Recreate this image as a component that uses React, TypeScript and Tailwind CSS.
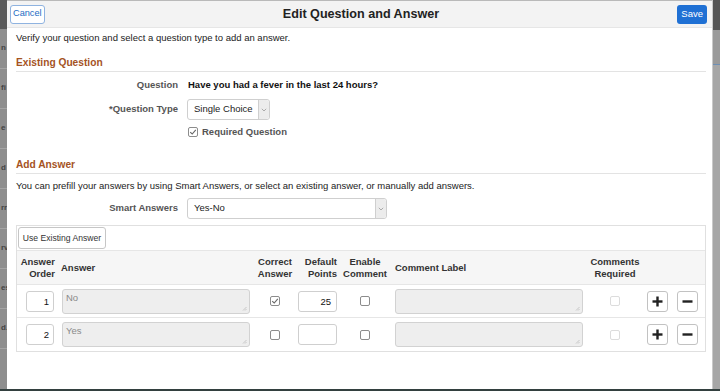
import React from 'react';

function Check({ checked = false, disabled = false }: { checked?: boolean; disabled?: boolean }) {
  return (
    <span
      className={`inline-flex h-[10px] w-[10px] items-center justify-center rounded-[2px] border bg-white ${
        disabled ? 'border-[#dcdcdc]' : 'border-[#8c8c8c]'
      }`}
    >
      {checked && (
        <svg width="8" height="8" viewBox="0 0 8 8">
          <path d="M1.2 4.2 L3.2 6 L6.8 1.8" fill="none" stroke="#666" strokeWidth="1.1" />
        </svg>
      )}
    </span>
  );
}

function Select({ value, width }: { value: string; width: string }) {
  return (
    <div className={`flex h-[21px] ${width} items-stretch rounded-[3px] border border-[#cfcfcf] bg-white`}>
      <div className="flex flex-1 items-center pl-[6px] text-[#222]">{value}</div>
      <div className="flex w-[11px] items-center justify-center rounded-r-[3px] border-l border-[#cfcfcf] bg-[#ececec]">
        <svg width="6" height="4" viewBox="0 0 6 4">
          <path d="M0.8 0.8 L3 3 L5.2 0.8" fill="none" stroke="#999" strokeWidth="0.8" />
        </svg>
      </div>
    </div>
  );
}

function DisabledArea({ text, width }: { text?: string; width: string }) {
  return (
    <div className={`relative h-[25px] ${width} rounded-[3px] border border-[#d2d2d2] bg-[#eeeeee] px-[3px] pt-[1px] text-[#8a8a8a]`}>
      {text}
      <svg className="absolute bottom-[2px] right-[2px]" width="5" height="5" viewBox="0 0 5 5">
        <path d="M4.5 1 L1 4.5 M4.5 3 L3 4.5" stroke="#b5b5b5" strokeWidth="0.7" />
      </svg>
    </div>
  );
}

function IconButton({ kind }: { kind: 'plus' | 'minus' }) {
  return (
    <button className="flex h-[21px] w-[21px] items-center justify-center rounded-[3px] border border-[#c2c2c2] bg-white">
      <svg width="11" height="11" viewBox="0 0 11 11">
        <rect x="0.5" y="4.3" width="10" height="2.4" fill="#222" />
        {kind === 'plus' && <rect x="4.3" y="0.5" width="2.4" height="10" fill="#222" />}
      </svg>
    </button>
  );
}

const answers = [
  { order: '1', text: 'No', correct: true, points: '25' },
  { order: '2', text: 'Yes', correct: false, points: '' },
];

export default function App() {
  return (
    <div className="relative flex h-[391px] w-[720px] overflow-hidden bg-[#8e8e8e] font-['Liberation_Sans',Arial,sans-serif] text-[9.5px] text-[#333]">
      {/* page behind the dialog, left */}
      <div className="flex w-[7px] flex-col">
        <div className="h-[29px] bg-[#5a5a5a]" />
        <div className="flex flex-1 flex-col text-[8px] leading-[9px] text-[#444]">
          {['n', 'fi', 'e', 'd', 'rr', 'rv', 'es', 'd.'].map((t, i) => (
            <div key={i} className="h-[40px] border-b border-[#a4a4a4] pt-[14px] pl-[1px] font-bold">
              {t}
            </div>
          ))}
        </div>
      </div>

      {/* dialog */}
      <div className="flex w-[705px] flex-col bg-white">
        <div className="flex h-[28px] items-center justify-between border-t border-b border-t-[#b9b9b9] border-b-[#e6e6e6] bg-[#f3f3f3] pl-[3px] pr-[5px]">
          <button className="h-[19px] rounded-[3px] border border-[#8fb3e0] bg-white px-[2px] text-[9.2px] text-[#1d6cc4]">
            Cancel
          </button>
          <div className="text-[12.6px] font-bold text-[#222]">Edit Question and Answer</div>
          <button className="h-[19px] rounded-[3px] bg-[#1f70d4] px-[4px] text-[9.5px] text-white">Save</button>
        </div>

        <div className="pl-[9px] pr-[6px]">
          <div className="h-[20px] leading-[20px] text-[#222]">Verify your question and select a question type to add an answer.</div>

          <div className="mt-[7px] h-[17px] border-b border-[#e3e3e3] text-[10.2px] font-bold leading-[16px] text-[#a5531f]">
            Existing Question
          </div>

          <div className="mt-[4px] flex h-[18px] items-center">
            <div className="w-[163px] pr-[1px] text-right font-bold text-[#555]">Question</div>
            <div className="pl-[9px] font-bold text-[#111]">Have you had a fever in the last 24 hours?</div>
          </div>

          <div className="mt-[5px] flex h-[21px] items-center">
            <div className="w-[163px] pr-[1px] text-right font-bold text-[#555]">*Question Type</div>
            <div className="pl-[8px]">
              <Select value="Single Choice" width="w-[83px]" />
            </div>
          </div>

          <div className="mt-[4px] flex h-[16px] items-center pl-[172px]">
            <Check checked />
            <span className="pl-[4px] font-bold text-[#555]">Required Question</span>
          </div>

          <div className="mt-[17px] h-[17px] border-b border-[#e3e3e3] text-[10.2px] font-bold leading-[16px] text-[#a5531f]">
            Add Answer
          </div>

          <div className="mt-[4px] h-[16px] leading-[16px] text-[#222]">
            You can prefill your answers by using Smart Answers, or select an existing answer, or manually add answers.
          </div>

          <div className="mt-[4px] flex h-[21px] items-center">
            <div className="w-[163px] pr-[1px] text-right font-bold text-[#555]">Smart Answers</div>
            <div className="pl-[8px]">
              <Select value="Yes-No" width="w-[200px]" />
            </div>
          </div>

          <div className="mt-[6px] border border-[#e0e0e0]">
            <div className="border-b border-[#e6e6e6] p-[1px]">
              <button className="h-[22px] w-[88px] rounded-[3px] border border-[#c6c6c6] bg-white text-[8.6px] text-[#333]">
                Use Existing Answer
              </button>
            </div>

            <div className="flex h-[34px] items-center border-b border-[#e6e6e6] bg-[#f6f6f6] font-bold leading-[11.5px] text-[#333]">
              <div className="w-[41px] pr-[3px] text-right">Answer<br />Order</div>
              <div className="w-[196px] pl-[3px]">Answer</div>
              <div className="w-[42px] text-center">Correct<br />Answer</div>
              <div className="w-[44px] pr-[3px] text-right">Default<br />Points</div>
              <div className="w-[50px] text-center">Enable<br />Comment</div>
              <div className="w-[197px] pl-[5px]">Comment Label</div>
              <div className="w-[56px] text-center">Comments<br />Required</div>
              <div className="flex-1" />
            </div>

            {answers.map((a, i) => (
              <div key={a.order} className={`flex h-[33px] items-center ${i === 0 ? 'border-b border-[#e6e6e6]' : ''}`}>
                <div className="flex w-[41px] justify-end pr-[4px]">
                  <div className="h-[21px] w-[28px] rounded-[3px] border border-[#cfcfcf] bg-white pr-[4px] text-right leading-[19px] text-[#111]">
                    {a.order}
                  </div>
                </div>
                <div className="w-[196px] pl-[4px]">
                  <DisabledArea text={a.text} width="w-[188px]" />
                </div>
                <div className="flex w-[42px] justify-center">
                  <Check checked={a.correct} />
                </div>
                <div className="w-[44px] pl-[2px]">
                  <div className="h-[21px] w-[39px] rounded-[3px] border border-[#cfcfcf] bg-white pr-[5px] text-right leading-[19px] text-[#111]">
                    {a.points}
                  </div>
                </div>
                <div className="flex w-[50px] justify-center">
                  <Check />
                </div>
                <div className="w-[197px] pl-[5px]">
                  <DisabledArea width="w-[188px]" />
                </div>
                <div className="flex w-[56px] justify-center">
                  <Check disabled />
                </div>
                <div className="flex flex-1 gap-[9px] pl-[4px]">
                  <IconButton kind="plus" />
                  <IconButton kind="minus" />
                </div>
              </div>
            ))}
          </div>
        </div>
        <div className="flex-1" />
      </div>

      {/* page behind the dialog, right */}
      <div className="flex w-[8px] flex-col border-l border-[#c9c9c9]">
        <div className="h-[30px] bg-[#555]" />
        <div className="h-[35px] border-b border-[#6d8fb5] bg-[#9a9a9a]" />
        <div className="flex-1 bg-[#a6a6a6]" />
      </div>

      <div className="absolute bottom-0 left-0 h-[2px] w-full bg-[#33403f]" />
    </div>
  );
}
